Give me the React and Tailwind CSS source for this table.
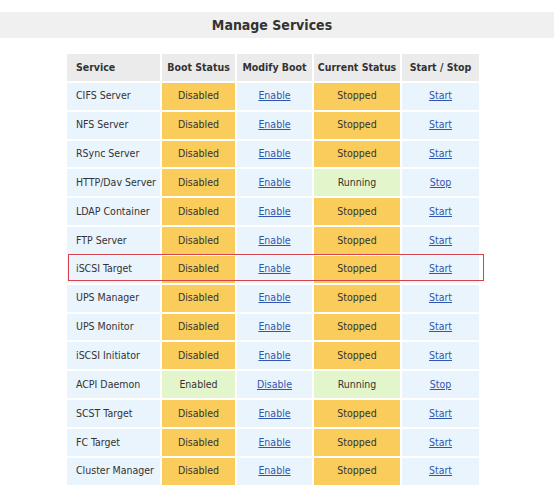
const services = [
  ["CIFS Server", false, false],
  ["NFS Server", false, false],
  ["RSync Server", false, false],
  ["HTTP/Dav Server", false, true],
  ["LDAP Container", false, false],
  ["FTP Server", false, false],
  ["iSCSI Target", false, false],
  ["UPS Manager", false, false],
  ["UPS Monitor", false, false],
  ["iSCSI Initiator", false, false],
  ["ACPI Daemon", true, true],
  ["SCST Target", false, false],
  ["FC Target", false, false],
  ["Cluster Manager", false, false],
];

const cell = "h-[26.85px] flex items-center justify-center whitespace-nowrap";

export default function App() {
  return (
    <div className="w-[554px] h-[498px] bg-white text-[#333] font-['DejaVu_Sans_Condensed',sans-serif] text-[10.5px]">
      <div className="h-[12px]" />
      <div className="h-[26px] bg-[#f0f0f0] flex items-center justify-center">
        <h1 className="text-[14px] font-bold text-[#333] -ml-[10px]">Manage Services</h1>
      </div>
      <div className="relative ml-[67px] mt-[16px] w-[412px]">
        <div className="grid grid-cols-[93px_73px_75px_86px_77px] gap-[2px]">
          <div className="h-[26.85px] flex items-center pl-[9px] bg-[#ebebeb] font-bold">Service</div>
          <div className={`${cell} bg-[#ebebeb] font-bold`}>Boot Status</div>
          <div className={`${cell} bg-[#ebebeb] font-bold`}>Modify Boot</div>
          <div className={`${cell} bg-[#ebebeb] font-bold`}>Current Status</div>
          <div className={`${cell} bg-[#ebebeb] font-bold`}>Start / Stop</div>
          {services.map(([name, bootOn, running]) => (
            <div key={name} className="contents">
              <div className="h-[26.85px] flex items-center pl-[9px] bg-[#eaf4fd] whitespace-nowrap">{name}</div>
              <div className={`${cell} ${bootOn ? "bg-[#e3f6cb]" : "bg-[#f9cc5b]"}`}>
                {bootOn ? "Enabled" : "Disabled"}
              </div>
              <div className={`${cell} bg-[#eaf4fd]`}>
                <a href="#" className="text-[#3156b0] underline">{bootOn ? "Disable" : "Enable"}</a>
              </div>
              <div className={`${cell} ${running ? "bg-[#e3f6cb]" : "bg-[#f9cc5b]"}`}>
                {running ? "Running" : "Stopped"}
              </div>
              <div className={`${cell} bg-[#eaf4fd]`}>
                <a href="#" className="text-[#3156b0] underline">{running ? "Stop" : "Start"}</a>
              </div>
            </div>
          ))}
        </div>
        <div className="absolute left-[1px] top-[200px] w-[416px] h-[27px] border border-[#d6414b] pointer-events-none" />
      </div>
    </div>
  );
}
